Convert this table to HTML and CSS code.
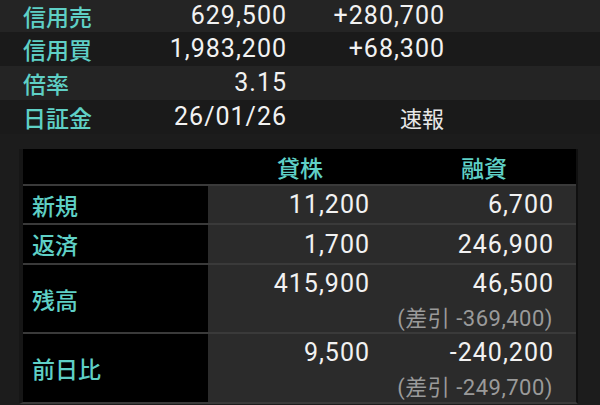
FILE: index.html
```html
<!DOCTYPE html>
<html lang="ja">
<head>
<meta charset="utf-8">
<link rel="stylesheet" href="styles.css">
</head>
<body>
<div class="summary">
  <div class="srow light first"><span class="lbl">信用売</span><span class="num">629,500</span><span class="num">+280,700</span></div>
  <div class="srow dark"><span class="lbl">信用買</span><span class="num">1,983,200</span><span class="num">+68,300</span></div>
  <div class="srow light"><span class="lbl">倍率</span><span class="num">3.15</span><span class="num"></span></div>
  <div class="srow dark"><span class="lbl">日証金</span><span class="num">26/01/26</span><span class="tag">速報</span></div>
</div>
<div class="board">
  <div class="hcell"></div>
  <div class="hcell">貸株</div>
  <div class="hcell">融資</div>

  <div class="lcell">新規</div>
  <div class="vcell"><span class="v">11,200</span></div>
  <div class="vcell"><span class="v">6,700</span></div>

  <div class="lcell">返済</div>
  <div class="vcell"><span class="v">1,700</span></div>
  <div class="vcell"><span class="v">246,900</span></div>

  <div class="lcell">残高</div>
  <div class="vcell two"><span class="v">415,900</span></div>
  <div class="vcell two"><span class="v">46,500</span><span class="sub">(差引 -369,400)</span></div>

  <div class="lcell">前日比</div>
  <div class="vcell two"><span class="v">9,500</span></div>
  <div class="vcell two"><span class="v">-240,200</span><span class="sub">(差引 -249,700)</span></div>
</div>
</body>
</html>
```
FILE: styles.css
```css
html, body {
  margin: 0;
  padding: 0;
}
body {
  width: 600px;
  height: 405px;
  overflow: hidden;
  background: #1c1c1c;
  font-family: Roboto, "Noto Sans CJK JP", sans-serif;
  color: #f2f2f2;
}
.srow {
  display: grid;
  grid-template-columns: 130px 134px 158px;
  padding-left: 23px;
  height: 34px;
  align-items: center;
}
.srow.first { height: 32px; }
.srow.light { background: #242424; }
.srow.dark { background: #1a1a1a; }
.lbl {
  font-family: "Noto Sans CJK JP", sans-serif;
  font-size: 23px;
  font-weight: 500;
  line-height: 32px;
  color: #5fd0c6;
}
.num {
  font-size: 25px;
  letter-spacing: 1px;
  line-height: 32px;
  text-align: right;
}
.tag {
  font-family: "Noto Sans CJK JP", sans-serif;
  font-size: 22px;
  line-height: 32px;
  text-align: right;
  padding-right: 1px;
  color: #e8e8e8;
}
.board {
  margin: 15px 0 0 19px;
  width: 553px;
  display: grid;
  grid-template-columns: 185px 184px 184px;
  grid-template-rows: 35px 37px 38px 67px 68px;
  row-gap: 2px;
  background: #3a3a3a;
  border-left: 4px solid #161616;
  border-right: 2px solid #101010;
  border-bottom: 2px solid #3a3a3a;
}
.hcell {
  background: #000;
  font-family: "Noto Sans CJK JP", sans-serif;
  font-size: 23px;
  font-weight: 500;
  color: #5fd0c6;
  display: flex;
  align-items: center;
  justify-content: center;
}
.lcell {
  background: #000;
  font-family: "Noto Sans CJK JP", sans-serif;
  font-size: 23px;
  font-weight: 500;
  color: #5fd0c6;
  display: flex;
  align-items: center;
  padding-left: 9px;
}
.vcell {
  background: #2b2b2b;
  display: flex;
  flex-direction: column;
  align-items: flex-end;
  padding-right: 22px;
  justify-content: center;
}
.vcell.two {
  justify-content: flex-start;
}
.v {
  font-size: 25px;
  letter-spacing: 1px;
  line-height: 37px;
}
.sub {
  font-size: 22px;
  letter-spacing: 0.5px;
  line-height: 33px;
  color: #9a9a9a;
  margin-right: 1px;
}
```
